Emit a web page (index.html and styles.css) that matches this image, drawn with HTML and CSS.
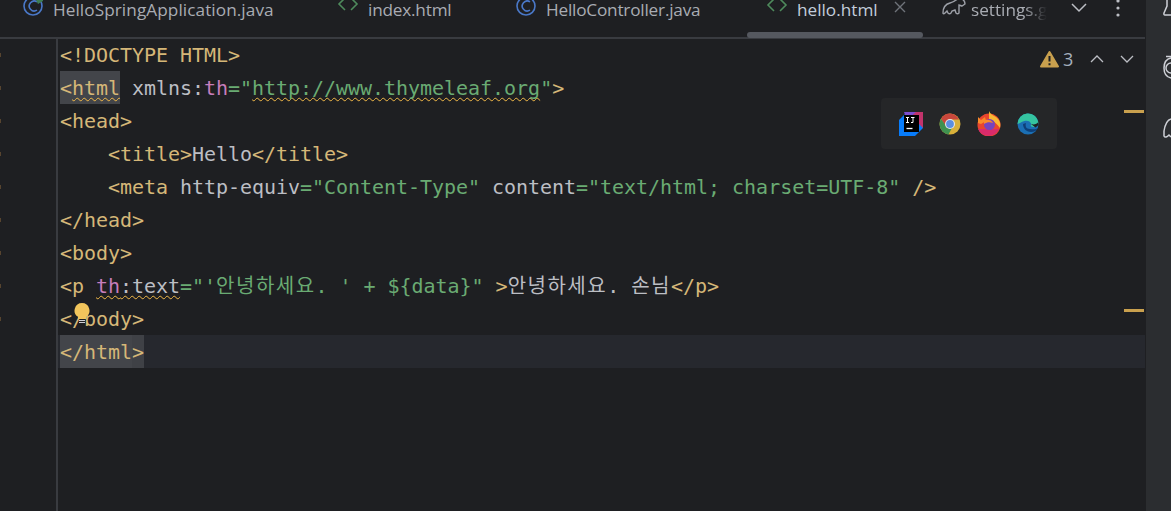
FILE: index.html
```html
<!DOCTYPE html>
<html lang="en">
<head>
<meta charset="utf-8">
<title>hello.html</title>
<link rel="stylesheet" href="styles.css">
</head>
<body>
<div class="app">
  <main class="main">
    <header class="tabs">
      <div class="tab t1">
        <svg class="ic" width="22" height="22" viewBox="0 0 22 22"><circle cx="11" cy="9" r="9" fill="none" stroke="#4a78c8" stroke-width="1.6"/><path d="M15 4.800a5 5 0 1 0 0 8.400" fill="none" stroke="#4a78c8" stroke-width="1.600"/><path d="M14 3l7-5v6l-5 3z" fill="#3f7d54"/></svg>
        <span>HelloSpringApplication.java</span>
      </div>
      <div class="tab t2">
        <svg class="ic" width="22" height="22" viewBox="0 0 22 22"><path d="M8 1L2 7l6 6M14 1l6 6-6 6" fill="none" stroke="#4e8a5c" stroke-width="1.6"/></svg>
        <span>index.html</span>
      </div>
      <div class="tab t3">
        <svg class="ic" width="22" height="22" viewBox="0 0 22 22"><circle cx="11" cy="9" r="9" fill="none" stroke="#4a78c8" stroke-width="1.6"/><path d="M15 4.800a5 5 0 1 0 0 8.400" fill="none" stroke="#4a78c8" stroke-width="1.600"/></svg>
        <span>HelloController.java</span>
      </div>
      <div class="tab t4">
        <svg class="ic" width="22" height="22" viewBox="0 0 22 22"><path d="M8 2L2 8l6 6M14 2l6 6-6 6" fill="none" stroke="#4e8a5c" stroke-width="1.6"/></svg>
        <span class="active">hello.html</span>
        <svg class="close" width="12" height="12" viewBox="0 0 12 12"><path d="M1 1l10 10M11 1L1 11" stroke="#6f737a" stroke-width="1.4"/></svg>
      </div>
      <div class="tab t5">
        <svg class="ic elephant" width="24" height="22" viewBox="0 0 24 22"><path d="M1 16c0-6 3-9 7-10 4-1 6-3 9-5l3 1c2 1 3 3 3 5l-3 2c-1 0-2-1-3-1v8c-1 1-2 1-3 0l-1-3-3 1-1 2c-1 1-2 1-3 0l-1-2-2 2c-1 1-2 1-2 0z" fill="none" stroke="#9da0a8" stroke-width="1.400"/></svg>
        <span class="fade">settings.g</span>
      </div>
      <svg class="chev" width="16" height="10" viewBox="0 0 16 10"><path d="M1 1l7 7 7-7" fill="none" stroke="#bcbec4" stroke-width="1.5"/></svg>
      <svg class="kebab" width="4" height="18" viewBox="0 0 4 18"><circle cx="2" cy="1" r="1.6" fill="#bcbec4"/><circle cx="2" cy="8" r="1.6" fill="#bcbec4"/><circle cx="2" cy="15" r="1.6" fill="#bcbec4"/></svg>
      <div class="thumb"></div>
    </header>

    <section class="editor">
      <div class="gutter"></div>
      <pre class="code"><div class="ln"><b>&lt;!DOCTYPE</b> <b>HTML&gt;</b></div><div class="ln"><span class="hl"><b>&lt;<u>html</u></b></span> <i>xmlns:</i><em>th</em><s>="</s><s class="wavy">http://www.thymeleaf.org</s><s>"</s><b>&gt;</b></div><div class="ln"><b>&lt;head&gt;</b></div><div class="ln">    <b>&lt;title&gt;</b><i>Hello</i><b>&lt;/title&gt;</b></div><div class="ln">    <b>&lt;meta</b> <i>http-equiv</i><s>="Content-Type"</s> <i>content</i><s>="text/html; charset=UTF-8"</s> <b>/&gt;</b></div><div class="ln"><b>&lt;/head&gt;</b></div><div class="ln"><b>&lt;body&gt;</b></div><div class="ln"><b>&lt;p</b> <span class="wavy"><em>th</em><i>:text</i></span><s>="'<span class="ko">안녕하세요</span>. ' + ${data}"</s> <b>&gt;</b><i><span class="ko">안녕하세요</span>. <span class="ko">손님</span></i><b>&lt;/p&gt;</b></div><div class="ln"><b>&lt;/body&gt;</b></div><div class="ln current"><span class="hl2"><b>&lt;/html</b></span><span class="hl3"><b>&gt;</b></span></div></pre>

      <svg class="bulb" width="16" height="22" viewBox="0 0 16 22"><path d="M8 0a7.500 7.500 0 0 0-4 13.800V16h8v-2.200A7.500 7.500 0 0 0 8 0z" fill="#f2c55c"/><path d="M5 17.500h6M5 19.500h6" stroke="#ced0d6" stroke-width="1.200"/></svg>

      <div class="inspect">
        <svg width="19" height="17" viewBox="0 0 19 17"><path d="M9.500 1L18 15.500H1z" fill="#c9a04e" stroke="#c9a04e" stroke-width="2" stroke-linejoin="round"/><path d="M9.500 5v5.500M9.500 12.200v2" stroke="#1e1f22" stroke-width="2"/></svg>
        <span class="count">3</span>
        <svg class="up" width="14" height="8" viewBox="0 0 14 8"><path d="M1 7l6-6 6 6" fill="none" stroke="#bcbec4" stroke-width="1.300"/></svg>
        <svg class="down" width="14" height="8" viewBox="0 0 14 8"><path d="M1 1l6 6 6-6" fill="none" stroke="#bcbec4" stroke-width="1.300"/></svg>
      </div>

      <div class="browsers">
        <svg width="24" height="24" viewBox="0 0 24 24"><path d="M0 8L8 0h16v16l-8 8H0z" fill="#087cfa"/><path d="M8 0h16v16z" fill="#c2336b"/><path d="M5 0h12L8 8z" fill="#7b4ed0"/><rect x="5" y="3" width="15" height="17" fill="#000"/><path d="M7 5.500h3M8.500 5.500v5M7 10.500h3M12 5.500h3.500M14 5.500v5h-2" fill="none" stroke="#fff" stroke-width="1"/><path d="M7.500 16.500h6" stroke="#fff" stroke-width="1.300"/></svg>
        <svg width="22" height="22" viewBox="0 0 22 22"><circle cx="11" cy="11" r="10.500" fill="#d9b03a"/><path d="M11 .5a10.500 10.500 0 0 0-9 5.200L6.500 13 11 6.500h9A10.500 10.500 0 0 0 11 .5z" fill="#c9473c"/><path d="M2 5.700a10.500 10.500 0 0 0 7.500 15.700L14 13H7z" fill="#3f9150"/><circle cx="11" cy="11" r="5" fill="#e8e8e8"/><circle cx="11" cy="11" r="3.900" fill="#5c8fe0"/></svg>
        <svg width="24" height="25" viewBox="0 0 24 25"><circle cx="12" cy="14" r="11.500" fill="#e8452e"/><path d="M1 18a11.500 11.500 0 0 0 21 0z" fill="#d92b6b"/><path d="M12 0c1 3 4 4 7 6 4 3 5 7 4 11-3-4-7-8-11-9z" fill="#f8b733"/><path d="M1 6l3 3 4-3 1 4-5 3-3-1z" fill="#f98a2a"/><circle cx="12.500" cy="13.500" r="5.500" fill="#7644bd"/><path d="M7 9c4-1 8 0 9 3-3-1-6-1-9 1z" fill="#f98a2a"/></svg>
        <svg width="22" height="22" viewBox="0 0 22 22"><circle cx="11" cy="11" r="10.500" fill="#1b6fb4"/><path d="M.5 11a10.500 10.500 0 0 1 20.800-2c.5 3-2 5-5 5-3 0-3-2-2-3-1-3-4-4-7-3-3 .5-5 3-6.800 3z" fill="#35c4a0"/><path d="M6 11c0 5 4 8 8 8 3 0 5-1 7-4-3 2-5 1-8 1-4 0-5-3-4-6z" fill="#0e3f78"/><path d="M14 11c3 1 6 0 7.300-2L21.500 12l-3 2.500z" fill="#1e1f22"/></svg>
      </div>

      <div class="mark m1"></div>
      <div class="mark m2"></div>
    </section>
  </main>
  <aside class="rail">
    <svg width="8" height="17" viewBox="0 0 8 17"><path d="M4-2v8L1 13q-.5 2 1 2h6" fill="none" stroke="#ced0d6" stroke-width="1.500"/></svg>
    <svg width="8" height="25" viewBox="0 0 8 25"><path d="M8 3C3 4 1 8 1 13s2 9 7 10M3 1.500h5M8 8a5 5 0 0 0 0 10" fill="none" stroke="#ced0d6" stroke-width="1.500"/></svg>
    <svg width="8" height="22" viewBox="0 0 8 22"><path d="M8 1C4 2 2 7 1 13v5c1 2 3 1 5-1l2 2" fill="none" stroke="#ced0d6" stroke-width="1.500"/></svg>
  </aside>
</div>
</body>
</html>
```

FILE: styles.css
```css
* { box-sizing: border-box; }
html, body { margin: 0; height: 100%; overflow: hidden; background: #1e1f22; }

.app { display: flex; height: 511px; }
.main { width: 1145px; display: flex; flex-direction: column; flex: none; }
.rail {
  flex: 1; background: #2b2d30; margin-left: 1px;
  display: flex; flex-direction: column; align-items: flex-end; gap: 38px;
  overflow: hidden;
}
.rail svg { flex: none; }

/* tabs */
.tabs {
  height: 39px; flex: none; position: relative;
  display: flex; align-items: flex-start;
  border-bottom: 2px solid #393b40;
  font: 17.2px/20px "Open Sans", "Noto Sans", sans-serif;
  color: #a9acb3;
}
.tab { display: flex; align-items: center; gap: 9px; height: 20px; flex: none; white-space: nowrap; }
.tab .ic { flex: none; margin-top: -4px; }
.t1 { margin-left: 22px; width: 315px; }
.t1 span { letter-spacing: .07px; }
.t2 { width: 178px; }
.t2 span, .t3 span { letter-spacing: -.2px; }
.t3 { width: 251px; }
.t4 { width: 176px; }
.t5 { width: 107px; }
.active { color: #c3cddb; }
.close { margin-left: 7px; margin-top: -6px; flex: none; }
.elephant { margin-right: -4px; }
.fade {
  -webkit-mask-image: linear-gradient(90deg, #000 70%, transparent 100%);
  mask-image: linear-gradient(90deg, #000 70%, transparent 100%);
  width: 76px;
}
.chev { margin-left: 22px; margin-top: 3px; flex: none; }
.kebab { margin-left: 29px; margin-top: 0; flex: none; }
.thumb {
  position: absolute; left: 747px; top: 32px; width: 176px; height: 6px;
  background: #55585f; border-radius: 3px;
}

/* editor */
.editor { position: relative; flex: 1; display: flex; overflow: hidden; }
.gutter {
  width: 58px; flex: none; border-right: 2px solid #393b40;
  background: repeating-linear-gradient(transparent 0 14px, #57442f 14px 18px, transparent 18px 33px) 0 0 / 1px 297px no-repeat;
}
.code {
  margin: -1px 0 0; padding: 0 0 0 2px; flex: 1;
  font: 20px/35px "DejaVu Sans Mono", "Noto Sans CJK KR", monospace;
  letter-spacing: -0.04px;
  color: #bcbec4;
}
.ln { height: 33px; white-space: pre; }
.ln b { font-weight: 400; color: #d5b778; }
.ln i { font-style: normal; color: #bcbec4; }
.ln em { font-style: normal; color: #c77dbb; }
.ln s { text-decoration: none; color: #6aab73; }
.ko { letter-spacing: 1.5px; }
.ln u, .ln .wavy {
  text-decoration: underline wavy #f0b848 1px;
  text-decoration-skip-ink: none;
  text-underline-offset: 2px;
}
.hl, .hl2, .hl3 { display: inline-block; height: 33px; vertical-align: top; }
.hl { background: #43454a; }
.hl2 { background: #43454a; }
.hl3 { background: #3f4146; }
.current { background: #26282e; margin-left: -2px; padding-left: 2px; }

.bulb { position: absolute; left: 74px; top: 264px; }
.inspect {
  position: absolute; left: 1040px; top: 10px;
  display: flex; align-items: center; height: 20px;
  font: 18px/20px "Open Sans", sans-serif; color: #a4afbd;
}
.count { margin-left: 4px; }
.up { margin-left: 17px; margin-right: -1px; }
.down { margin-left: 17px; }

.browsers {
  position: absolute; left: 881px; top: 59px; width: 176px; height: 51px;
  background: #252628; border-radius: 4px;
  display: flex; align-items: center; justify-content: space-between;
  padding: 0 18px;
}
.mark { position: absolute; left: 1124px; width: 20px; height: 3px; background: #c9a04e; }
.m1 { top: 71px; }
.m2 { top: 270px; }
```
